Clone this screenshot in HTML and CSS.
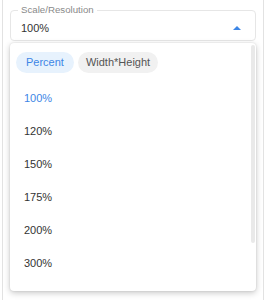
FILE: index.html
```html
<!DOCTYPE html>
<html lang="en">
<head>
  <meta charset="UTF-8">
  <title>Scale/Resolution</title>
  <link rel="stylesheet" href="styles.css">
</head>
<body>
  <div class="panel">
    <fieldset class="field">
      <legend>Scale/Resolution</legend>
      <div class="field-row">
        <span class="field-value">100%</span>
        <span class="field-arrow"></span>
      </div>
    </fieldset>

    <div class="under-row">
      <div class="under-mark"></div>
    </div>

    <div class="menu">
      <div class="menu-list">
        <div class="chips">
          <span class="chip chip-active">Percent</span>
          <span class="chip">Width*Height</span>
        </div>
        <div class="option option-selected">100%</div>
        <div class="option">120%</div>
        <div class="option">150%</div>
        <div class="option">175%</div>
        <div class="option">200%</div>
        <div class="option">300%</div>
        <div class="option">400%</div>
      </div>
      <div class="scrollbar">
        <div class="scroll-thumb"></div>
      </div>
    </div>
  </div>
</body>
</html>
```

FILE: styles.css
```css
:root {
  --blue: #3d86e6;
  --blue-light: #e7f2fd;
  --text: #333333;
  --muted: #8a8a8a;
  --line: #e2e2e2;
}

* {
  box-sizing: border-box;
}

body {
  margin: 0;
  background: #ffffff;
  font-family: "Liberation Sans", Arial, sans-serif;
  color: var(--text);
  overflow: hidden;
}

.panel {
  position: relative;
  height: 300px;
  margin: 0 1px 0 2px;
  padding: 4px 7px 0 7px;
  border-left: 1px solid var(--line);
  border-right: 1px solid var(--line);
}

/* outlined select */
.field {
  margin: 0;
  padding: 0 14px 0 10px;
  height: 37px;
  border: 1px solid #e6e6e6;
  border-radius: 4px;
}

.field legend {
  padding: 0 3px;
  margin-left: -3px;
  font-size: 9.7px;
  line-height: 12px;
  color: var(--muted);
}

.field-row {
  display: flex;
  align-items: center;
  justify-content: space-between;
  height: 24px;
}

.field-value {
  font-size: 11px;
}

.field-arrow {
  width: 0;
  height: 0;
  border-left: 4px solid transparent;
  border-right: 4px solid transparent;
  border-bottom: 4px solid var(--blue);
}

/* control peeking out under the menu */
.under-row {
  padding: 21px 0 0 0;
}

.under-mark {
  width: 2px;
  height: 8px;
  background: #7a7a7a;
}

/* dropdown */
.menu {
  position: absolute;
  top: 43px;
  left: 7px;
  width: 246px;
  height: 248px;
  display: flex;
  background: #ffffff;
  border-radius: 4px;
  box-shadow: 0 2px 6px rgba(0, 0, 0, 0.22), 0 0 2px rgba(0, 0, 0, 0.12);
  overflow: hidden;
}

.menu-list {
  flex: 1;
  padding: 9px 0 0 6px;
}

.chips {
  display: flex;
  gap: 4px;
  margin-bottom: 9px;
}

.chip {
  height: 21px;
  padding: 0 8px;
  border-radius: 11px;
  background: #f1f1f1;
  color: #555555;
  font-size: 11px;
  line-height: 21px;
}

.chip-active {
  padding: 0 10px;
  background: var(--blue-light);
  color: var(--blue);
}

.option {
  height: 33px;
  line-height: 33px;
  padding-left: 8px;
  font-size: 11px;
  color: var(--text);
}

.option-selected {
  color: var(--blue);
}

.scrollbar {
  width: 4px;
  margin-right: 1px;
  padding-top: 2px;
}

.scroll-thumb {
  height: 198px;
  background: #e9e9e9;
  border-radius: 2px;
}
```
